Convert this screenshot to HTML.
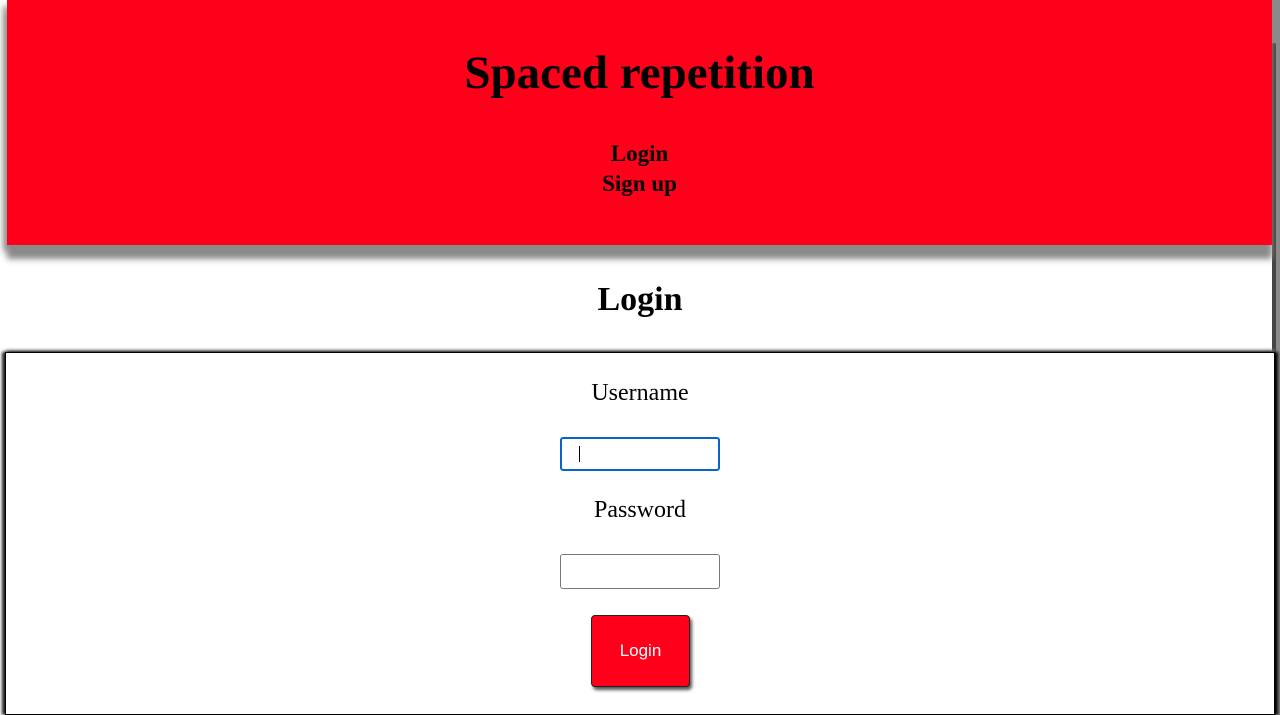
<!DOCTYPE html>
<html><head><style>
html,body{margin:0;width:1280px;height:715px;overflow:hidden;}
body{background:#fff;position:relative;font-family:"Liberation Serif",serif;}
.hdr{position:absolute;left:7px;top:0;width:1265px;height:245px;background:#ff001b;box-shadow:0 14px 6px #8a8a8a,-4px 6px 6px #999;text-align:center;}
.hdr h1{margin:0;position:absolute;top:46px;width:100%;font-size:47px;font-weight:bold;}
.nav{position:absolute;top:139px;width:100%;font-size:23px;font-weight:bold;line-height:30px;}
.rs{position:absolute;left:1272px;top:0;width:8px;height:715px;background:#8a8a8a;}
.rb{position:absolute;left:1272px;top:43px;width:4px;height:672px;background:#444;border-radius:3px;}
h2{position:absolute;top:281px;width:1280px;text-align:center;margin:0;font-size:34px;font-weight:bold;}
.box{position:absolute;left:5px;top:352px;width:1268px;height:361px;border:1px solid #000;box-shadow:-3px 0 3px #222,3px 0 3px #000,0 -2px 3px #999;background:#fff;}
.lbl{position:absolute;width:1280px;left:0;text-align:center;font-size:24px;}
.in{position:absolute;left:560px;width:160px;height:34px;border:1px solid #777;border-radius:3px;box-sizing:border-box;background:#fff;}
.btn{position:absolute;left:591px;top:615px;width:99px;height:72px;background:#ff001b;border:1px solid #222;border-radius:4px;box-shadow:2px 3px 3px #555;color:#fff;font-family:"Liberation Sans",sans-serif;font-size:17px;text-align:center;line-height:70px;box-sizing:border-box;}
</style></head><body>
<div class="rs"></div><div class="rb"></div>
<div class="hdr"><h1>Spaced repetition</h1><div class="nav">Login<br>Sign up</div></div>
<h2>Login</h2>
<div class="box"></div>
<div class="lbl" style="top:380px">Username</div>
<div class="in" style="top:437px;border:2px solid #0a63c9;"><div style="position:absolute;left:17px;top:7px;width:1px;height:16px;background:#000"></div></div>
<div class="lbl" style="top:497px">Password</div>
<div class="in" style="top:554px;height:35px;"></div>
<div class="btn">Login</div>
</body></html>
